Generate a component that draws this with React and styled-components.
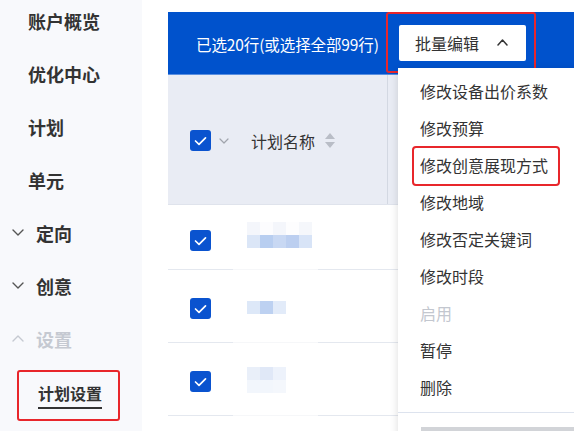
import React from 'react';
import styled, { createGlobalStyle } from 'styled-components';

const Global = createGlobalStyle`
  html, body { margin: 0; padding: 0; background: #fff; }
  body { font-family: "Noto Sans CJK SC", "Noto Sans", sans-serif; }
  * { box-sizing: border-box; }
`;

const Page = styled.div`
  display: flex;
  width: 574px;
  height: 431px;
  overflow: hidden;
  background: #fff;
`;

const Sidebar = styled.nav`
  width: 142px;
  flex-shrink: 0;
  background: #f8f9fc;
  display: flex;
  flex-direction: column;
`;

const NavList = styled.div`
  margin-top: -6px;
  display: flex;
  flex-direction: column;
`;

const NavItem = styled.div`
  height: 53px;
  display: flex;
  align-items: center;
  gap: 12px;
  padding-left: ${p => (p.$chevron ? 12 : 28)}px;
  font-size: 18px;
  font-weight: 700;
  color: ${p => (p.$muted ? '#c5c9d1' : '#333')};
  white-space: nowrap;
`;

const SubItemFrame = styled.div`
  margin: 5px 0 0 17px;
  width: 103px;
  height: 51px;
  border: 2px solid #e8262b;
  border-radius: 3px;
  padding-left: 19px;
  display: flex;
  flex-direction: column;
  justify-content: center;
  align-items: flex-start;
  gap: 4px;
`;

const SubItemText = styled.span`
  font-size: 16px;
  font-weight: 700;
  color: #333;
  line-height: 20px;
`;

const Underline = styled.span`
  width: 64px;
  height: 2px;
  background: #333;
`;

const Main = styled.main`
  flex: 1;
  margin-left: 26px;
  padding-top: 12px;
  position: relative;
  display: flex;
  flex-direction: column;
`;

const Toolbar = styled.div`
  height: 63px;
  background: #0052cc;
  display: flex;
  align-items: flex-start;
  padding-left: 28px;
  box-shadow: inset 0 -1px 0 #5a8fe0;
`;

const SelectionText = styled.span`
  width: 190px;
  align-self: center;
  color: #fff;
  font-size: 15.5px;
  white-space: nowrap;
  letter-spacing: -0.1px;
`;

const RedFrame = styled.div`
  width: 150px;
  height: 61px;
  border: 2px solid #e8262b;
  border-radius: 3px;
  display: flex;
  align-items: center;
  padding-left: 11px;
`;

const BatchButton = styled.div`
  width: 127px;
  height: 36px;
  background: #fff;
  border-radius: 2px;
  display: flex;
  align-items: center;
  justify-content: space-between;
  padding: 0 18px 0 16px;
  font-size: 16px;
  color: #333;
`;

const TableHead = styled.div`
  height: 130px;
  background: #e9ecf4;
  border-bottom: 1px solid #dfe3ec;
  display: flex;
`;

const HeadCell = styled.div`
  width: 220px;
  border-right: 1px solid #d3d8e2;
  display: flex;
  align-items: center;
  padding: 2px 0 0 22px;
`;

const HeadCaret = styled.span`
  margin-left: 8px;
  display: inline-flex;
`;

const HeadTitle = styled.span`
  margin-left: 22px;
  font-size: 16px;
  color: #333;
`;

const SortIcon = styled.svg`
  margin-left: 10px;
`;

const CheckBox = styled.span`
  width: 21px;
  height: 21px;
  flex-shrink: 0;
  border-radius: 3px;
  background: #0a53cf;
  display: inline-flex;
  align-items: center;
  justify-content: center;
  margin-top: ${p => p.$top || 0}px;
`;

const Row = styled.div`
  height: ${p => p.$h}px;
  display: flex;
  align-items: flex-start;
  padding-left: 22px;
`;

const Mosaic = styled.div`
  margin-left: 36px;
  margin-top: ${p => p.$top}px;
  display: grid;
  grid-template-columns: repeat(${p => p.$cols}, 13px);
  grid-auto-rows: 13px;
`;

const Pixel = styled.span`
  background: ${p => p.$c};
`;

const Separator = styled.div`
  height: 1px;
  display: flex;
`;

const SepLine = styled.span`
  width: ${p => (p.$w ? `${p.$w}px` : 'auto')};
  flex: ${p => (p.$w ? 'none' : 1)};
  background: ${p => p.$c || '#e4e8ef'};
`;

const Dropdown = styled.div`
  position: absolute;
  left: 230px;
  top: 68px;
  width: 200px;
  background: #fff;
  box-shadow: 0 2px 8px rgba(0, 0, 0, 0.14);
  padding-top: 4px;
  display: flex;
  flex-direction: column;
`;

const MenuItem = styled.div`
  height: 37px;
  display: flex;
  align-items: center;
  padding-left: 22px;
  font-size: 16px;
  color: ${p => (p.$disabled ? '#c3c7cf' : '#333')};
  white-space: nowrap;
`;

const MenuLabel = styled.span`
  position: relative;
  line-height: 22px;
  ${p =>
    p.$marked &&
    `&::after {
      content: '';
      position: absolute;
      top: -8px;
      bottom: -10px;
      left: -8px;
      right: -12px;
      border: 2px solid #e8262b;
      border-radius: 4px;
    }`}
`;

const MenuFooter = styled.div`
  margin-top: 7px;
  border-top: 1px solid #dde3ee;
  height: 30px;
  padding: 14px 0 0 23px;
`;

const ScrollBar = styled.div`
  height: 8px;
  background: #d2d4d8;
`;

const Chevron = ({ up, color = '#555', w = 12, h = 7, sw = 1.4 }) => (
  <svg width={w} height={h} viewBox={`0 0 ${w} ${h}`} fill="none">
    <path
      d={up ? `M1 ${h - 1} L${w / 2} 1 L${w - 1} ${h - 1}` : `M1 1 L${w / 2} ${h - 1} L${w - 1} 1`}
      stroke={color}
      strokeWidth={sw}
      strokeLinecap="round"
      strokeLinejoin="round"
    />
  </svg>
);

const Check = ({ top }) => (
  <CheckBox $top={top}>
    <svg width="13" height="10" viewBox="0 0 13 10" fill="none">
      <path d="M1.5 5 L5 8.3 L11.5 1.8" stroke="#fff" strokeWidth="1.7" strokeLinecap="round" strokeLinejoin="round" />
    </svg>
  </CheckBox>
);

const rows = [
  {
    h: 64, cb: 25, mt: 17, cols: 5,
    px: ['#f4f6fb', '#fcfcfe', '#f4f6fb', '#fdfdfe', '#f5f7fb', '#dbe6f7', '#b8cef0', '#c8d8f3', '#bccff0', '#d8e4f7'],
  },
  { h: 72, cb: 28, mt: 31, cols: 3, px: ['#dde8f8', '#bdd1f1', '#e2ebf9'] },
  { h: 72, cb: 28, mt: 24, cols: 3, px: ['#e9eff9', '#e0e8f7', '#edf2fb', '#f2f6fc', '#f2f6fc', '#f4f7fc'] },
];

const menu = [
  { t: '修改设备出价系数' },
  { t: '修改预算' },
  { t: '修改创意展现方式', marked: true },
  { t: '修改地域' },
  { t: '修改否定关键词' },
  { t: '修改时段' },
  { t: '启用', disabled: true },
  { t: '暂停' },
  { t: '删除' },
];

export default function App() {
  return (
    <Page>
      <Global />
      <Sidebar>
        <NavList>
          <NavItem>账户概览</NavItem>
          <NavItem>优化中心</NavItem>
          <NavItem>计划</NavItem>
          <NavItem>单元</NavItem>
          <NavItem $chevron>
            <Chevron />
            定向
          </NavItem>
          <NavItem $chevron>
            <Chevron />
            创意
          </NavItem>
          <NavItem $chevron $muted>
            <Chevron up color="#c5c9d1" />
            设置
          </NavItem>
          <SubItemFrame>
            <SubItemText>计划设置</SubItemText>
            <Underline />
          </SubItemFrame>
        </NavList>
      </Sidebar>
      <Main>
        <Toolbar>
          <SelectionText>已选20行(或选择全部99行)</SelectionText>
          <RedFrame>
            <BatchButton>
              批量编辑
              <Chevron up color="#333" w={11} h={7} sw={1.5} />
            </BatchButton>
          </RedFrame>
        </Toolbar>
        <TableHead>
          <HeadCell>
            <Check />
            <HeadCaret>
              <Chevron color="#a0a4ac" w={10} h={6} sw={1.2} />
            </HeadCaret>
            <HeadTitle>计划名称</HeadTitle>
            <SortIcon width="10" height="15" viewBox="0 0 10 15">
              <polygon points="5,0 10,6 0,6" fill="#b9bdc6" />
              <polygon points="0,9 10,9 5,15" fill="#b9bdc6" />
            </SortIcon>
          </HeadCell>
        </TableHead>
        {rows.map((r, i) => (
          <React.Fragment key={i}>
            <Row $h={r.h}>
              <Check top={r.cb} />
              <Mosaic $top={r.mt} $cols={r.cols}>
                {r.px.map((c, j) => (
                  <Pixel key={j} $c={c} />
                ))}
              </Mosaic>
            </Row>
            <Separator>
              <SepLine $w={65} />
              <SepLine $w={85} $c="#f6f7f9" />
              <SepLine />
            </Separator>
          </React.Fragment>
        ))}
        <Dropdown>
          {menu.map(m => (
            <MenuItem key={m.t} $disabled={m.disabled}>
              <MenuLabel $marked={m.marked}>{m.t}</MenuLabel>
            </MenuItem>
          ))}
          <MenuFooter>
            <ScrollBar />
          </MenuFooter>
        </Dropdown>
      </Main>
    </Page>
  );
}
